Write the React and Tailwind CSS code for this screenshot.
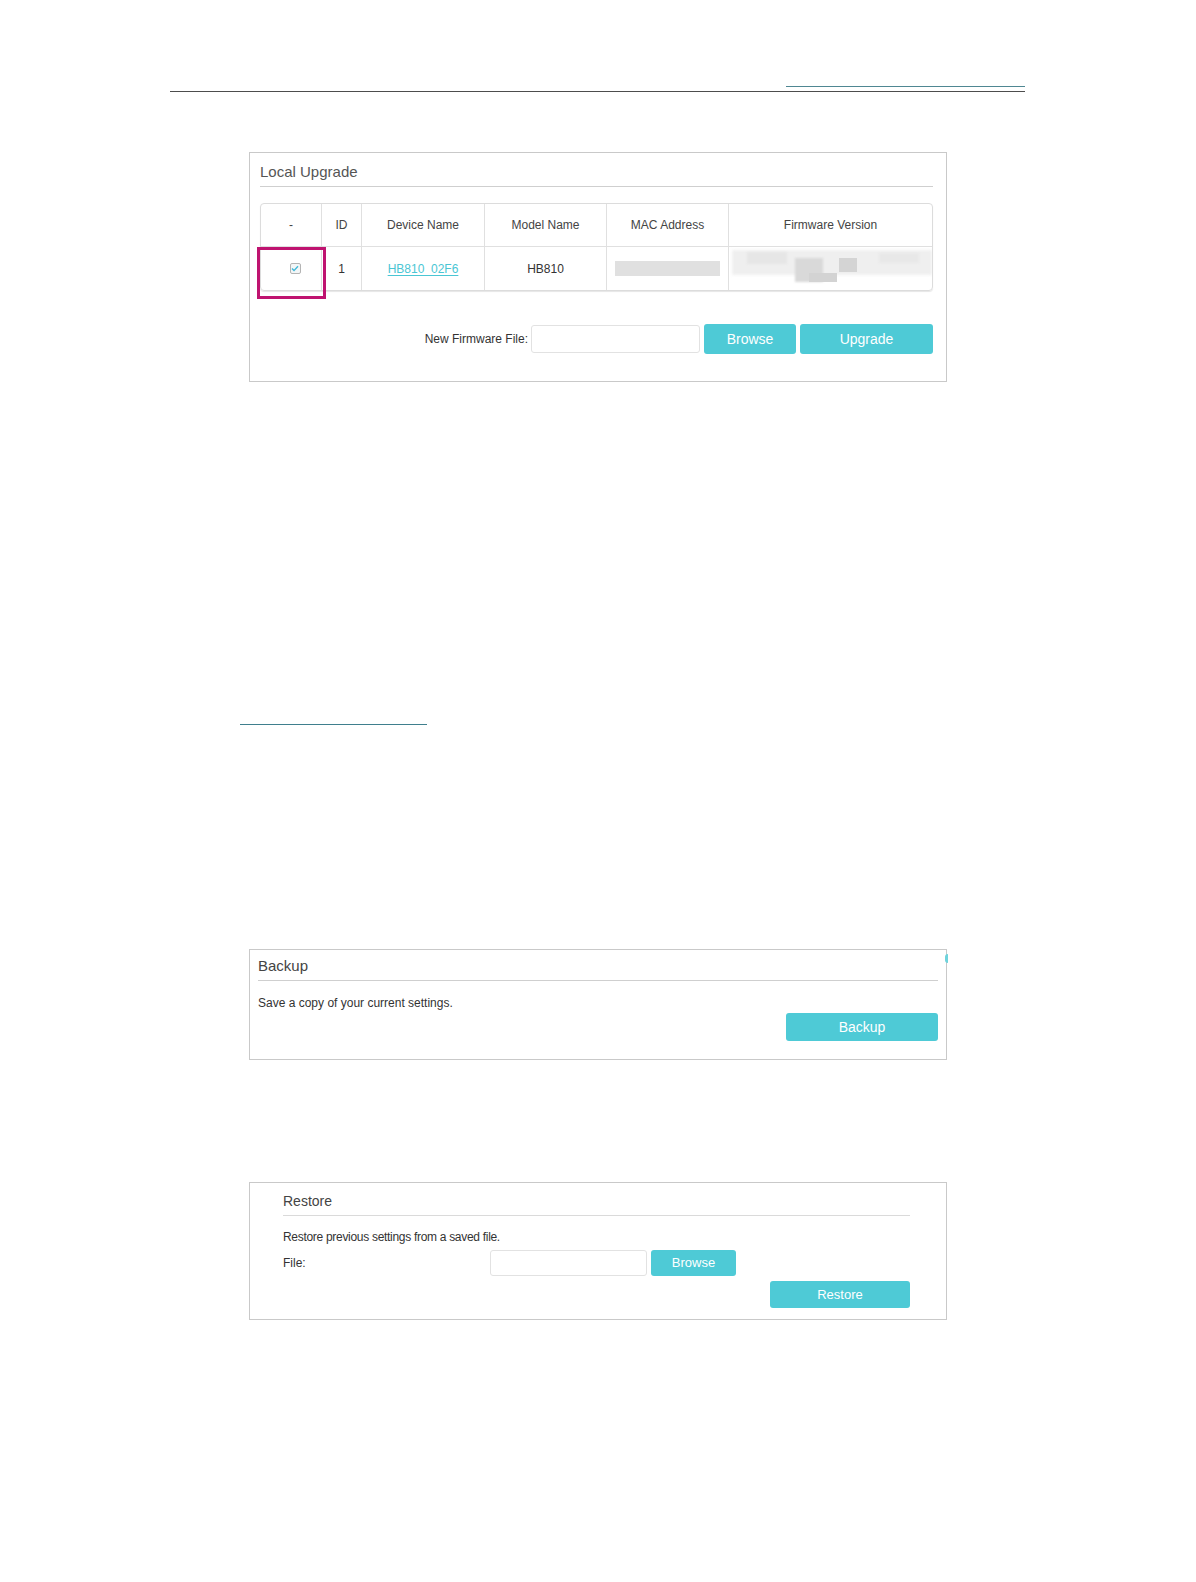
import React from "react";

const font = { fontFamily: '"Liberation Sans", Arial, sans-serif' };

function Btn({ className, children }) {
  return (
    <div
      className={
        "flex items-center justify-center rounded-[3px] bg-[#4ecad6] text-white " +
        className
      }
    >
      {children}
    </div>
  );
}

function Checkbox() {
  return (
    <div className="flex h-[11px] w-[11px] items-center justify-center rounded-[2px] border border-[#b4b4b4] bg-[#f3f6f7]">
      <svg width="8" height="7" viewBox="0 0 8 7">
        <polyline
          points="1,3.6 3,5.6 7,1.2"
          fill="none"
          stroke="#3fb8d8"
          strokeWidth="1.4"
        />
      </svg>
    </div>
  );
}

export default function App() {
  const headers = ["-", "ID", "Device Name", "Model Name", "MAC Address", "Firmware Version"];
  return (
    <div className="relative min-h-[1582px] w-[1196px] bg-white" style={font}>
      {/* page header lines */}
      <div className="ml-[170px] w-[855px] pt-[86px]">
        <div className="ml-auto h-px w-[239px] bg-[#4f8792]" />
        <div className="mt-[4px] h-px w-full bg-[#4d4d4d]" />
      </div>

      {/* Local Upgrade */}
      <div className="ml-[249px] mt-[60px] h-[230px] w-[698px] border border-[#c9c9c9] pl-[10px] pr-[13px]">
        <div className="border-b border-[#cfcfcf] pb-[4px] pt-[9px] text-[15px] leading-[20px] text-[#555]">
          Local Upgrade
        </div>
        <div className="relative mt-[16px]">
          <div className="grid grid-cols-[61px_40px_123px_122px_122px_1fr] overflow-hidden rounded-[4px] border border-[#dcdcdc] text-[12px] shadow-[0_1px_1px_rgba(0,0,0,0.1)]">
            {headers.map((h, i) => (
              <div
                key={h}
                className={
                  "flex h-[43px] items-center justify-center border-b border-[#e0e0e0] text-[#444] " +
                  (i < 5 ? "border-r" : "")
                }
              >
                {h}
              </div>
            ))}
            <div className="flex h-[43px] items-center justify-center border-r border-[#e0e0e0] pl-[8px]">
              <Checkbox />
            </div>
            <div className="flex h-[43px] items-center justify-center border-r border-[#e0e0e0] text-[#333]">
              1
            </div>
            <div className="flex h-[43px] items-center justify-center border-r border-[#e0e0e0]">
              <span className="text-[#4ac6d4] underline underline-offset-2">HB810_02F6</span>
            </div>
            <div className="flex h-[43px] items-center justify-center border-r border-[#e0e0e0] text-[#333]">
              HB810
            </div>
            <div className="flex h-[43px] items-center justify-center border-r border-[#e0e0e0]">
              <div className="h-[15px] w-[105px] bg-[#e0e0e0] blur-[0.6px]" />
            </div>
            <div className="relative h-[43px] overflow-hidden">
              <div className="absolute left-[3px] top-[3px] h-[25px] w-[200px] bg-[#efefef] blur-[1.5px]" />
              <div className="absolute left-[18px] top-[5px] h-[12px] w-[40px] bg-[#e6e6e6] blur-[1px]" />
              <div className="absolute left-[66px] top-[11px] h-[24px] w-[28px] bg-[#d9d9d9] blur-[0.8px]" />
              <div className="absolute left-[80px] top-[26px] h-[9px] w-[28px] bg-[#d3d3d3] blur-[0.6px]" />
              <div className="absolute left-[110px] top-[11px] h-[14px] w-[18px] bg-[#d4d4d4] blur-[0.6px]" />
              <div className="absolute left-[150px] top-[6px] h-[10px] w-[40px] bg-[#e8e8e8] blur-[1px]" />
            </div>
          </div>
          <div className="absolute left-[-3px] top-[44px] h-[52px] w-[69px] border-[3px] border-[#bf1370]" />
        </div>
        <div className="mt-[33px] flex items-center justify-end gap-[4px]">
          <span className="mr-[-1px] text-[12px] text-[#333]">New Firmware File:</span>
          <div className="h-[28px] w-[169px] rounded-[3px] border border-[#e2e2e2] bg-white" />
          <Btn className="h-[30px] w-[92px] text-[14px]">Browse</Btn>
          <Btn className="h-[30px] w-[133px] text-[14px]">Upgrade</Btn>
        </div>
      </div>

      {/* section link underline */}
      <div className="ml-[240px] mt-[342px] h-px w-[187px] bg-[#3f7f8d]" />

      {/* Backup */}
      <div className="relative ml-[249px] mt-[224px] h-[111px] w-[698px] border border-[#c9c9c9] px-[8px]">
        <div className="border-b border-[#cfcfcf] pb-[4px] pt-[6px] text-[15px] leading-[20px] text-[#444]">
          Backup
        </div>
        <div className="mt-[14px] text-[12px] leading-[16px] text-[#333]">
          Save a copy of your current settings.
        </div>
        <div className="mt-[2px] flex justify-end">
          <Btn className="h-[28px] w-[152px] text-[14px]">Backup</Btn>
        </div>
        <div className="absolute right-[-2px] top-[4px] h-[9px] w-[3px] rounded-l-full bg-[#6fd3dc]" />
      </div>

      {/* Restore */}
      <div className="ml-[249px] mt-[122px] h-[138px] w-[698px] border border-[#c9c9c9] pl-[33px] pr-[36px]">
        <div className="border-b border-[#dadada] pb-[4px] pt-[8px] text-[14px] leading-[20px] text-[#444]">
          Restore
        </div>
        <div className="mt-[13px] text-[12px] leading-[16px] tracking-[-0.3px] text-[#333]">
          Restore previous settings from a saved file.
        </div>
        <div className="mt-[5px] flex items-center">
          <span className="w-[207px] text-[12px] text-[#333]">File:</span>
          <div className="h-[26px] w-[157px] rounded-[3px] border border-[#e2e2e2] bg-white" />
          <Btn className="ml-[4px] h-[26px] w-[85px] text-[13px]">Browse</Btn>
        </div>
        <div className="mt-[5px] flex justify-end">
          <Btn className="h-[27px] w-[140px] text-[13px]">Restore</Btn>
        </div>
      </div>
    </div>
  );
}
